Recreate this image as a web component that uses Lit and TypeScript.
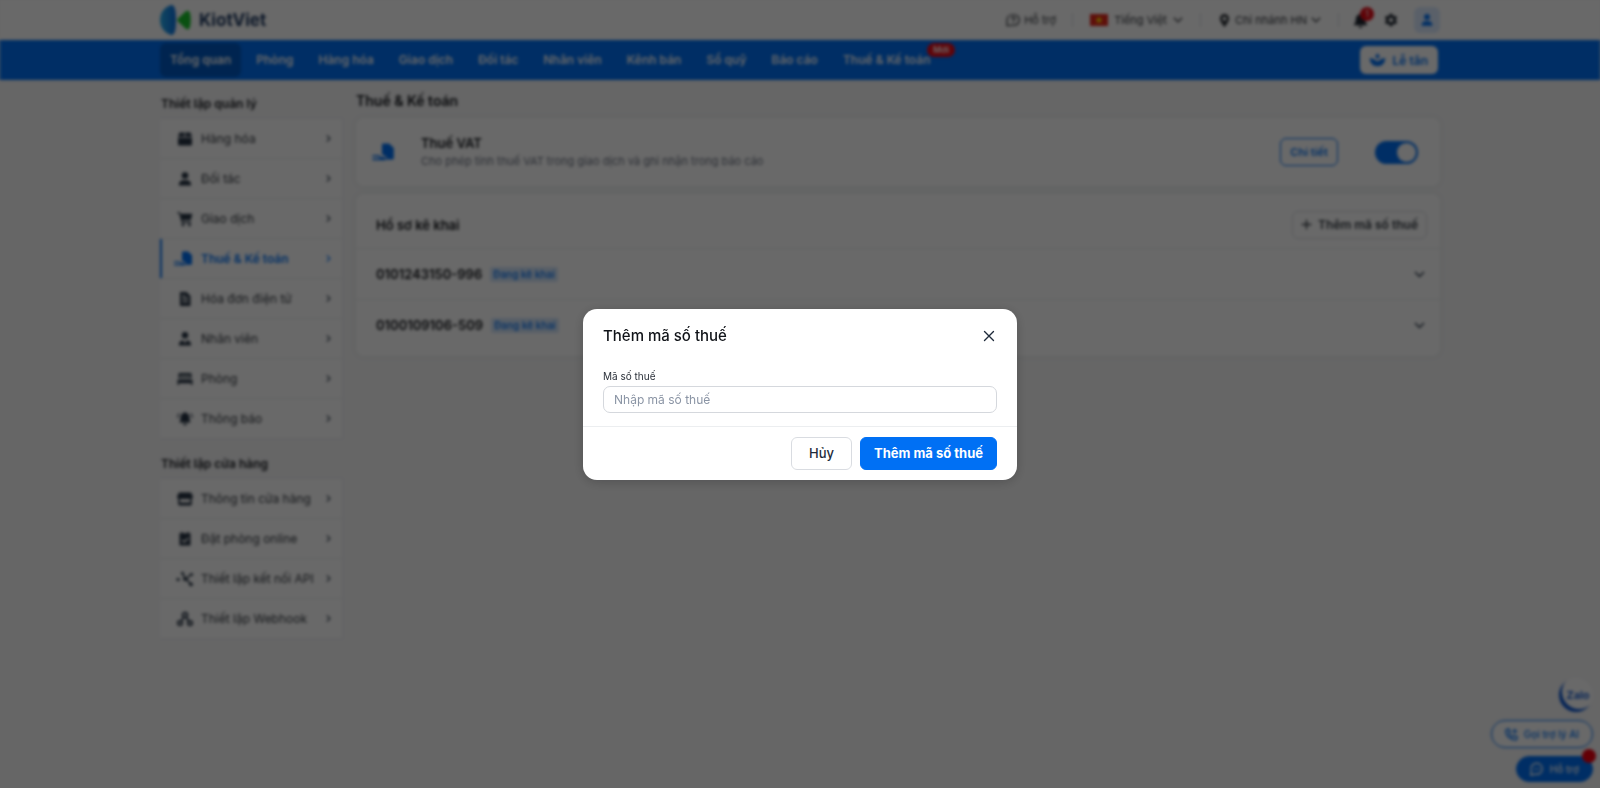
import { LitElement, html, css, svg, nothing } from "lit";
import { customElement, property, state } from "lit/decorators.js";
import { classMap } from "lit/directives/class-map.js";

// Glyphs are drawn on a 16 x 16 grid and inherit the text colour.
const glyphs: Record<string, unknown> = {
  box: svg`<path fill="currentColor" d="M2.500 1.500h5v4.200H1zM8.500 1.500h5L15 5.700H8.500zM1 6.700h14v6.800a1 1 0 0 1-1 1H2a1 1 0 0 1-1-1z"/>`,
  user: svg`<circle cx="8" cy="4.500" r="3.300" fill="currentColor"/><path fill="currentColor" d="M1.800 14.500c0-3.300 1.900-5.200 4.400-5.200h3.600c2.500 0 4.400 1.900 4.400 5.200z"/>`,
  staff: svg`<circle cx="8" cy="4.300" r="3.200" fill="currentColor"/><path fill="currentColor" d="M1.800 14.500c0-3.100 1.700-5 4.200-5.200l2 3 2-3c2.500.2 4.200 2.100 4.200 5.200z"/>`,
  cart: svg`<path fill="currentColor" d="M.5 1h2.300l.6 1.800h12L13.800 9H5.600l.3 1.300h8v1.400H4.700L2.200 2.400H.5z"/><circle cx="6" cy="13.700" r="1.500" fill="currentColor"/><circle cx="12.500" cy="13.700" r="1.500" fill="currentColor"/>`,
  tax: svg`<path fill="currentColor" d="M5 1.500a1 1 0 0 1 1-1h5L15 4.200v8.600a1 1 0 0 1-1 1H9.800L8.500 11.500 5 9.500z"/><path fill="none" stroke="currentColor" stroke-width="1.300" d="M-3 10.800h5l2.200 1.600h3.300M-3 13.800h9.500l3-.6"/>`,
  bill: svg`<path fill="currentColor" fill-rule="evenodd" d="M3 1h6.500L13.500 5v10H3zm2.200 5.500V8h6V6.500zm0 3.300v1.400h6V9.800zm0-5.800v1.200h3V4z"/>`,
  bed: svg`<path fill="currentColor" fill-rule="evenodd" d="M2.500 2h11a1 1 0 0 1 1 1v4h-13V3a1 1 0 0 1 1-1zm.5 2.500v1.300h10V4.500zM.5 8.500h15V14H14v-1.800H2V14H.5z"/>`,
  alarm: svg`<path fill="currentColor" d="M8 1a1 1 0 0 1 1 1c2.300.5 3.500 2.300 3.500 4.500 0 3 .5 4 1.300 5H2.200c.8-1 1.300-2 1.300-5C3.500 4.300 4.700 2.500 7 2a1 1 0 0 1 1-1zM6 12.500h4a2 2 0 0 1-4 0z"/><path fill="none" stroke="currentColor" stroke-width="1.100" d="M.6 7c0-2 .5-3.500 1.700-4.700M15.400 7c0-2-.5-3.500-1.700-4.700"/>`,
  shop: svg`<path fill="currentColor" fill-rule="evenodd" d="M2 1.500h12L16 5.500c0 1-.5 1.700-1.200 2V13a1.500 1.500 0 0 1-1.500 1.500H2.700A1.500 1.500 0 0 1 1.200 13V7.500C.5 7.200 0 6.500 0 5.500zM3 8v3.500h10V8z"/>`,
  booking: svg`<path fill="currentColor" fill-rule="evenodd" d="M4 1h1.500v1.200h5V1H12v1.200h1.500v12.300h-11V2.200H4zm7 5.500L7.300 10 5.500 8.400l-1 1L7.300 12 12 7.500z"/>`,
  api: svg`<path fill="none" stroke="currentColor" stroke-width="1.500" d="M0 8.500h2.500M5.500 2l2 4L13.500 13M9 8.500l4-4.500"/><g fill="currentColor"><circle cx="1" cy="8.500" r="1.600"/><circle cx="5.500" cy="2.300" r="1.500"/><circle cx="14.500" cy="3.500" r="1.600"/><circle cx="14" cy="13.300" r="1.900"/><circle cx="8" cy="8" r="2"/></g>`,
  webhook: svg`<g fill="none" stroke="currentColor" stroke-width="1.800"><circle cx="8" cy="4" r="2.400"/><circle cx="3" cy="12" r="2.200"/><circle cx="13" cy="12" r="2.200"/><path d="M7 6l-2.700 4M9 6l2.700 4"/></g>`,
  right: svg`<path fill="none" stroke="currentColor" stroke-width="2" d="M5 2.500l5.500 5.500L5 13.500"/>`,
  down: svg`<path fill="none" stroke="currentColor" stroke-width="2" d="M1.500 4.500L8 11l6.500-6.500"/>`,
  plus: svg`<path stroke="currentColor" stroke-width="2" d="M8 1v14M1 8h14"/>`,
  close: svg`<path stroke="currentColor" stroke-width="1.800" stroke-linecap="round" d="M2 2l12 12M14 2L2 14"/>`,
  help: svg`<path fill="none" stroke="currentColor" stroke-width="1.400" d="M1.200 14.500V7.500A6 6 0 0 1 7.200 2h2a6 6 0 0 1 0 12z"/><path fill="none" stroke="currentColor" stroke-width="1.300" d="M6.200 6.500c0-2.300 4-2.300 4 0 0 1.300-2 1.300-2 2.800M8.200 10.500v1.300"/>`,
  pin: svg`<path fill="currentColor" fill-rule="evenodd" d="M8 0a5.700 5.700 0 0 1 5.700 5.700C13.700 9.500 8 16 8 16S2.300 9.500 2.300 5.700A5.700 5.700 0 0 1 8 0zm0 3.300a2.500 2.500 0 1 0 0 5 2.500 2.500 0 0 0 0-5z"/>`,
  bell: svg`<path fill="currentColor" d="M8 0a1 1 0 0 1 1 1.200c2.700.6 4 2.600 4 5.300 0 3 .6 4.200 2 5.500v1H1v-1c1.400-1.300 2-2.500 2-5.500 0-2.700 1.300-4.700 4-5.300A1 1 0 0 1 8 0zM6 14h4a2 2 0 0 1-4 0z"/>`,
  gear: svg`<path fill="currentColor" fill-rule="evenodd" d="M6.500.8h3l.5 2 1.500.9 2-.6L15 5.700l-1.500 1.500v1.600l1.500 1.500-1.500 2.600-2-.6-1.500.9-.5 2h-3l-.5-2-1.500-.9-2 .6L1 10.300l1.500-1.500V7.200L1 5.700l1.500-2.600 2 .6L6 2.800zM8 5.300a2.700 2.700 0 1 0 0 5.400 2.700 2.700 0 0 0 0-5.400z"/>`,
  lotus: svg`<path fill="currentColor" d="M8 .5l2.600 3L8 6.500l-2.600-3zM-.3 5.500c2 0 3.600.4 4.800 1.300L8 9l3.500-2.200c1.200-.9 2.800-1.300 4.800-1.300-.3 5.300-3.300 8.500-8.300 8.500S0 10.800-.3 5.500z"/>`,
  call: svg`<path fill="none" stroke="currentColor" stroke-width="1.700" d="M1 2.500L4.500 1l2 3.700-1.700 1.600c.7 2 2.200 3.700 4.500 4.700l1.800-1.800L15 11l-1 3.500C7 15.500.5 9.500 1 2.500z"/><path fill="currentColor" d="M12 0l1 2.800L16 4l-3 1-1 3-1-3-3-1 3-1.200z"/>`,
  chat: svg`<path fill="none" stroke="currentColor" stroke-width="1.600" d="M1 15l.6-4.300A6.500 6.500 0 0 1 7.500 1.500h1A6.300 6.300 0 0 1 8.500 14H6z"/><path stroke="currentColor" stroke-width="1.600" stroke-dasharray="1.600 1.400" d="M4.600 8h7"/>`,
};

const icon = (name: string, size = 16) => html`
  <svg class="glyph" width=${size} height=${size} viewBox="0 0 16 16" overflow="visible" aria-hidden="true">${glyphs[name]}</svg>
`;

const shared = css`
  :host { display: block; }
  * { box-sizing: border-box; }
  a { color: inherit; text-decoration: none; }
  button { font: inherit; color: inherit; cursor: pointer; margin: 0; }
  .glyph { display: block; flex: none; }
  .wrap { max-width: 1280px; margin: 0 auto; }
`;

@customElement("site-header")
class SiteHeader extends LitElement {
  static styles = [shared, css`
    .top { background: #fff; }
    .bar { height: 40px; display: flex; align-items: center; justify-content: space-between; }
    .brand { display: flex; align-items: center; gap: 8px; font-size: 17px; font-weight: 700; color: #1f3a63; }
    .tools { display: flex; align-items: center; color: #31353b; font-size: 11px; }
    .tool { display: flex; align-items: center; gap: 4px; padding: 0 16px; border: 0; border-right: 1px solid #dcdfe3; background: none; height: 14px; }
    .tool.lang { gap: 6px; padding: 0 17px; }
    .tool.branch { padding: 0 17px; }
    .icons { display: flex; align-items: center; gap: 16px; padding-left: 14px; color: #1e2530; }
    .plain { position: relative; border: 0; padding: 0; background: none; color: inherit; }
    .count { position: absolute; right: -6px; top: -6px; width: 14px; height: 14px; border-radius: 7px; background: #e80a16; color: #fff; font-size: 9px; line-height: 14px; text-align: center; }
    .avatar { border: 0; border-radius: 6px; background: #dbeaff; color: #0070f4; padding: 6px; }
    .nav { background: #0070f4; color: #fff; }
    .links { display: flex; gap: 5px; font-size: 12px; font-weight: 600; line-height: 34px; }
    .link { position: relative; padding: 0 10px; border-radius: 6px; }
    .link.on { background: #0059c2; }
    .new { position: absolute; left: 94px; top: 0; padding: 0 6px; border-radius: 7px; background: #e80a16; font-size: 9px; line-height: 14px; }
    .desk { display: flex; align-items: center; gap: 8px; height: 28px; padding: 0 10px; margin-right: 2px; border: 0; border-radius: 6px; background: #fff; color: #0070f4; font-size: 12px; font-weight: 600; }
  `];

  render() {
    const links = ["Tổng quan", "Phòng", "Hàng hóa", "Giao dịch", "Đối tác", "Nhân viên", "Kênh bán", "Sổ quỹ", "Báo cáo", "Thuế & Kế toán"];
    return html`
      <header class="top">
        <div class="wrap bar">
          <a class="brand" href="#">
            <svg class="glyph" width="31" height="32" viewBox="0 0 31 32" aria-hidden="true">
              <defs><linearGradient id="fin"><stop stop-color="#2bb0ee" /><stop offset="1" stop-color="#0a6fe0" /></linearGradient></defs>
              <path fill="url(#fin)" d="M11 1c3.500-.6 5 4.500 5 15s-1.500 15.600-5 15C5 29 0 24 0 16S5 3 11 1z" />
              <path fill="#19c22b" d="M18 14.500l7.500-7c2-1.500 3.700-1 4.500 1.500 1 4.500 1 9.500 0 14-.8 2.500-2.500 3-4.500 1.500l-7.500-7a2 2 0 0 1 0-3z" />
            </svg>
            KiotViet
          </a>
          <div class="tools">
            <button class="tool">${icon("help", 14)} Hỗ trợ</button>
            <button class="tool lang">
              <svg class="glyph" width="18" height="12" viewBox="0 0 18 12" aria-hidden="true"><path fill="#e4251b" d="M0 0h18v12H0z" /><path fill="#ffde00" d="M9 2l1 2.800h3l-2.400 1.700.9 2.900L9 7.700 6.500 9.400l.9-2.900L5 4.800h3z" /></svg>
              Tiếng Việt ${icon("down", 10)}
            </button>
            <button class="tool branch">${icon("pin", 13)} Chi nhánh HN ${icon("down", 10)}</button>
            <div class="icons">
              <button class="plain" aria-label="Thông báo">${icon("bell", 15)}<span class="count">1</span></button>
              <button class="plain" aria-label="Thiết lập">${icon("gear", 14)}</button>
              <button class="avatar" aria-label="Tài khoản">${icon("user", 14)}</button>
            </div>
          </div>
        </div>
      </header>
      <div class="nav">
        <div class="wrap bar">
          <nav class="links">
            ${links.map((text, i) => html`<a href="#" class=${classMap({ link: true, on: i === 0 })}>${text}${i === links.length - 1 ? html`<span class="new">Mới</span>` : nothing}</a>`)}
          </nav>
          <button class="desk">${icon("lotus", 15)} Lễ tân</button>
        </div>
      </div>
    `;
  }
}

interface MenuItem { glyph: string; text: string; on?: boolean }

@customElement("side-menu")
class SideMenu extends LitElement {
  @property() heading = "";
  @property({ attribute: false }) items: MenuItem[] = [];

  static styles = [shared, css`
    .heading { margin: 0 0 6px; padding-left: 1px; font-size: 12px; line-height: 16px; font-weight: 600; color: #15181d; }
    .list { margin: 0; padding: 0; list-style: none; background: #fff; border: 1px solid #eceef0; border-bottom: 0; border-left: 0; color: #33383f; }
    .item { display: grid; grid-template-columns: 16px 1fr 9px; align-items: center; gap: 8px; height: 40px; padding: 0 9px 0 17px; border-bottom: 1px solid #eceef0; font-size: 12px; }
    .item .glyph:first-child { color: #273444; }
    .item.on, .item.on .glyph:first-child { color: #0070f4; }
    .item.on { font-weight: 600; box-shadow: inset 2px 0 #0070f4; }
    .arrow { color: #4b5563; }
  `];

  render() {
    return html`
      <h2 class="heading">${this.heading}</h2>
      <ul class="list">
        ${this.items.map((item) => html`
          <li><a href="#" class=${classMap({ item: true, on: !!item.on })}>${icon(item.glyph, 16)}<span>${item.text}</span><span class="arrow">${icon("right", 9)}</span></a></li>
        `)}
      </ul>
    `;
  }
}

@customElement("tax-settings")
class TaxSettings extends LitElement {
  @property({ attribute: false }) codes: string[] = [];

  static styles = [shared, css`
    .title { margin: 0 0 8px; font-size: 14px; line-height: 18px; font-weight: 600; color: #101318; }
    .card { background: #fff; border-radius: 8px; box-shadow: 0 0 6px #e6ecea; }
    .vat { display: grid; grid-template-columns: 20px 1fr auto auto; align-items: center; padding: 12px 22px 12px 20px; margin-bottom: 8px; height: 68px; color: #0070f4; }
    .info { padding-left: 25px; }
    .name { display: block; font-size: 13px; line-height: 18px; font-weight: 600; color: #15181d; }
    .note { margin: 0; font-size: 11px; line-height: 18px; color: #6b7280; }
    .detail { height: 28px; padding: 0 9px; margin-right: 37px; border: 1px solid #0070f4; border-radius: 6px; background: #fff; color: #0070f4; font-size: 11px; font-weight: 600; }
    .switch { appearance: none; display: flex; align-items: center; justify-content: flex-end; width: 43px; height: 23px; margin: 0; padding: 2px; border-radius: 12px; background: #0070f4; }
    .switch::before { content: ""; width: 19px; height: 19px; border-radius: 50%; background: #fff; }
    .switch:not(:checked) { justify-content: flex-start; background: #c3c8cf; }
    .row { display: flex; align-items: center; gap: 6px; height: 51px; padding: 0 15px 0 20px; border-top: 1px solid #eceef0; font-size: 13px; font-weight: 600; color: #101318; }
    .row.head { height: 54px; border: 0; padding-right: 13px; padding-top: 7px; }
    .row .last { margin-left: auto; }
    .files { padding-bottom: 6px; }
    .tag { margin-left: 2px; padding: 0 3px; border-radius: 2px; background: #d4e6fb; color: #0070f4; font-size: 10px; line-height: 15px; font-weight: 500; }
    .add { display: flex; align-items: center; gap: 6px; height: 28px; padding: 0 8px; border: 1px solid #d9dce1; border-radius: 6px; background: #fff; color: #323941; font-size: 12px; font-weight: 600; }
    .open { border: 0; background: none; padding: 0; color: #273444; }
  `];

  render() {
    return html`
      <h1 class="title">Thuế &amp; Kế toán</h1>
      <section class="card vat">
        ${icon("tax", 19)}
        <div class="info">
          <label class="name" for="vat">Thuế VAT</label>
          <p class="note">Cho phép tính thuế VAT trong giao dịch và ghi nhận trong báo cáo</p>
        </div>
        <button class="detail">Chi tiết</button>
        <input class="switch" id="vat" type="checkbox" role="switch" checked />
      </section>
      <section class="card files">
        <div class="row head">Hồ sơ kê khai <button class="add last">${icon("plus", 11)} Thêm mã số thuế</button></div>
        ${this.codes.map((code) => html`
          <div class="row">${code} <span class="tag">Đang kê khai</span><button class="open last" aria-label="Mở ${code}">${icon("down", 11)}</button></div>
        `)}
      </section>
    `;
  }
}

@customElement("support-dock")
class SupportDock extends LitElement {
  static styles = [shared, css`
    :host { position: fixed; right: 7px; bottom: 6px; }
    .dock { display: flex; flex-direction: column; align-items: flex-end; gap: 8px; font-size: 10px; font-weight: 500; }
    .zalo { width: 34px; height: 34px; border: 0; padding: 0 0 0 4px; border-radius: 50%; background: #fff; box-shadow: inset 3px -3px #0a55d0; color: #0a55d0; font-size: 11px; font-weight: 600; }
    .pill { position: relative; display: flex; align-items: center; gap: 6px; height: 28px; padding: 0 13px; border: 1px solid #0070f4; border-radius: 14px; background: #fff; color: #0070f4; }
    .pill.fill { height: 26px; background: #0070f4; color: #fff; }
    .dot { position: absolute; right: -4px; top: -8px; width: 14px; height: 14px; border-radius: 50%; background: #f00010; }
  `];

  render() {
    return html`
      <div class="dock">
        <button class="zalo">Zalo</button>
        <button class="pill">${icon("call", 13)} Gọi trợ lý AI</button>
        <button class="pill fill">${icon("chat", 14)} Hỗ trợ<span class="dot"></span></button>
      </div>
    `;
  }
}

@customElement("tax-code-dialog")
class TaxCodeDialog extends LitElement {
  static styles = [shared, css`
    :host { position: fixed; inset: 0; display: flex; align-items: center; justify-content: center; background: rgba(0, 0, 0, 0.59); backdrop-filter: blur(1px); }
    .panel { width: 434px; max-width: calc(100% - 32px); border-radius: 14px; background: #fff; box-shadow: 0 2px 12px rgba(0, 0, 0, 0.2); color: #101318; }
    .head { display: flex; align-items: center; justify-content: space-between; padding: 16px 22px 16px 20px; }
    .title { margin: 0; font-size: 15px; line-height: 22px; font-weight: 500; }
    .close { padding: 0; border: 0; background: none; color: #1e2a3a; }
    .field { display: flex; flex-direction: column; gap: 2px; padding: 5px 20px 13px; }
    .label { font-size: 10px; line-height: 16px; color: #2b313a; }
    .input { height: 27px; padding: 0 10px; border: 1px solid #d5d8dd; border-radius: 7px; font: inherit; font-size: 12px; color: #101318; outline: none; }
    .input::placeholder { color: #8b95a5; opacity: 1; }
    .foot { display: flex; justify-content: flex-end; gap: 8px; padding: 10px 20px; border-top: 1px solid #eceef0; }
    .btn { height: 33px; padding: 0 17px; border: 1px solid #d9dce1; border-radius: 6px; background: #fff; color: #1e2a3a; font-size: 13px; font-weight: 500; }
    .btn.main { padding: 0 13px; border-color: #0070f4; background: #0070f4; color: #fff; font-weight: 700; }
  `];

  private done() {
    this.dispatchEvent(new CustomEvent("done"));
  }

  render() {
    return html`
      <div class="panel" role="dialog" aria-modal="true" aria-labelledby="title">
        <div class="head">
          <h2 class="title" id="title">Thêm mã số thuế</h2>
          <button class="close" aria-label="Đóng" @click=${this.done}>${icon("close", 12)}</button>
        </div>
        <div class="field">
          <label class="label" for="code">Mã số thuế</label>
          <input class="input" id="code" type="text" placeholder="Nhập mã số thuế" />
        </div>
        <div class="foot">
          <button class="btn" @click=${this.done}>Hủy</button>
          <button class="btn main" @click=${this.done}>Thêm mã số thuế</button>
        </div>
      </div>
    `;
  }
}

@customElement("app-root")
class AppRoot extends LitElement {
  @state() private adding = true;

  private manage: MenuItem[] = [
    { glyph: "box", text: "Hàng hóa" },
    { glyph: "user", text: "Đối tác" },
    { glyph: "cart", text: "Giao dịch" },
    { glyph: "tax", text: "Thuế & Kế toán", on: true },
    { glyph: "bill", text: "Hóa đơn điện tử" },
    { glyph: "staff", text: "Nhân viên" },
    { glyph: "bed", text: "Phòng" },
    { glyph: "alarm", text: "Thông báo" },
  ];

  private store: MenuItem[] = [
    { glyph: "shop", text: "Thông tin cửa hàng" },
    { glyph: "booking", text: "Đặt phòng online" },
    { glyph: "api", text: "Thiết lập kết nối API" },
    { glyph: "webhook", text: "Thiết lập Webhook" },
  ];

  static styles = [shared, css`
    :host { background: #f7f7f8; font-family: Inter, "Liberation Sans", sans-serif; font-size: 13px; }
    .page { min-height: 100vh; background: #f7f7f8; }
    .page.behind { filter: blur(1px); }
    .body { display: grid; grid-template-columns: 183px minmax(0, 1fr); gap: 13px; }
    .side { display: flex; flex-direction: column; gap: 17px; padding-top: 16px; }
    .main { padding-top: 12px; }
  `];

  render() {
    return html`
      <div class=${classMap({ page: true, behind: this.adding })}>
        <site-header></site-header>
        <div class="wrap body">
          <aside class="side">
            <side-menu heading="Thiết lập quản lý" .items=${this.manage}></side-menu>
            <side-menu heading="Thiết lập cửa hàng" .items=${this.store}></side-menu>
          </aside>
          <main class="main"><tax-settings .codes=${["0101243150-996", "0100109106-509"]}></tax-settings></main>
        </div>
        <support-dock></support-dock>
      </div>
      ${this.adding ? html`<tax-code-dialog @done=${() => (this.adding = false)}></tax-code-dialog>` : nothing}
    `;
  }
}
